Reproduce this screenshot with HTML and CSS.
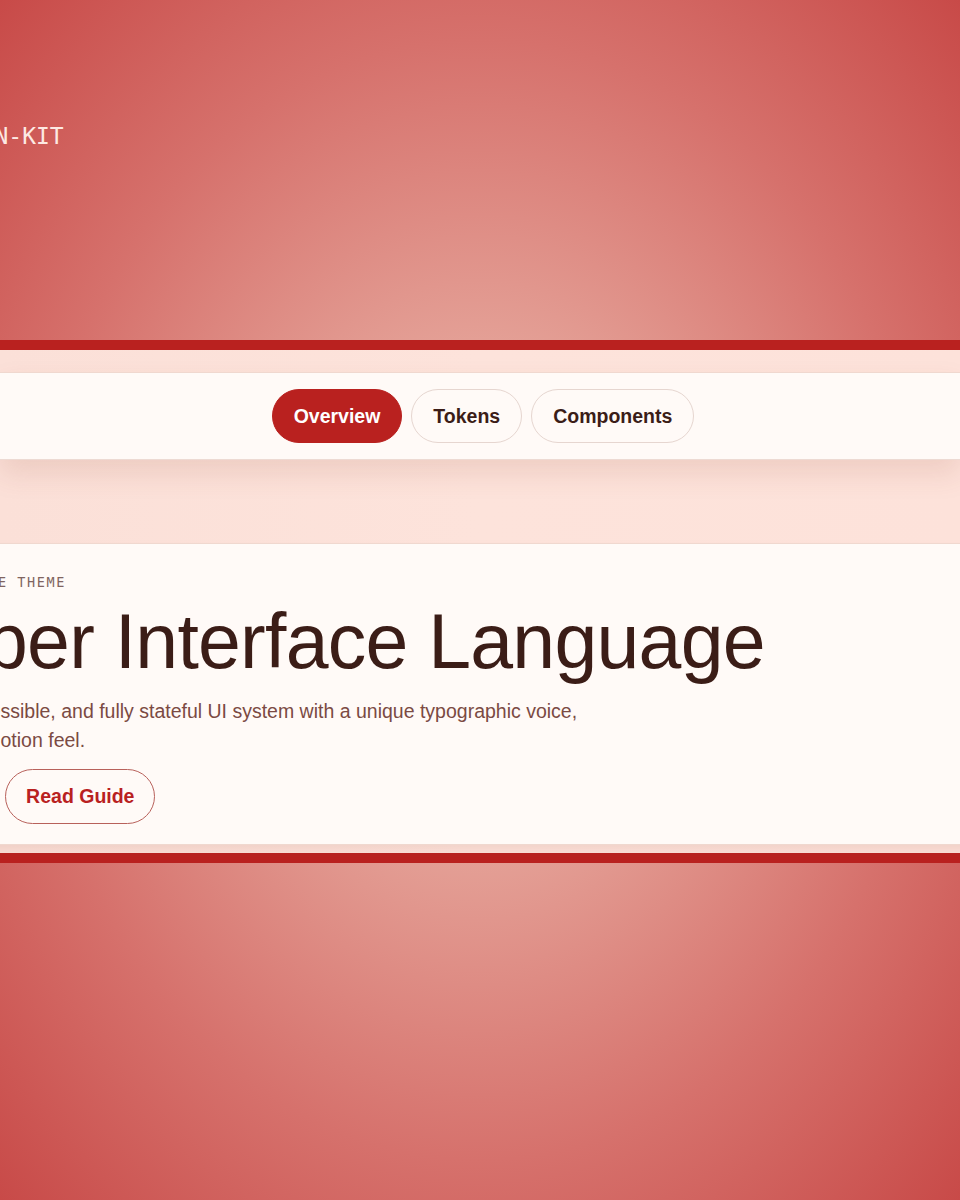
FILE: index.html
```html
<!DOCTYPE html>
<html lang="en">
  <head>
    <meta charset="UTF-8" />
    <meta name="viewport" content="width=device-width, initial-scale=1.0" />
    <title>Open Design-Kit - Copper Theme</title>
    <link rel="stylesheet" href="styles.css">
  </head>

  <body>
    <header class="topbar">
      <div class="frame">
        <span class="kit-label">OPEN DESIGN-KIT</span>
      </div>
    </header>

    <section class="showcase">
      <nav class="tabs">
        <div class="frame tabs-row">
          <a href="#" class="pill active">Overview</a>
          <a href="#" class="pill">Tokens</a>
          <a href="#" class="pill">Components</a>
        </div>
      </nav>

      <div class="hero">
        <p class="eyebrow">COPPER SIGNATURE THEME</p>
        <h1>Copper Interface Language</h1>
        <p class="lead">
          A rich, bold, accessible, and fully stateful UI system with a unique
          typographic voice, and a polished motion feel.
        </p>
        <div class="actions">
          <a href="#" class="btn btn-primary">Get Started</a>
          <a href="#" class="btn btn-outline">Read Guide</a>
        </div>
      </div>
    </section>
  </body>
</html>
```

FILE: styles.css
```css
:root {
  --red: #b9211f;
  --red-dark: #a51b1a;
  --blush: #fde3db;
  --paper: #fffaf7;
  --line: #f0d8cf;
  --ink: #3b1d17;
  --ink-soft: #7b4a43;
  --muted: #80645f;
  --frame-width: 1264px;
  --frame-offset: -149px;
}

* {
  box-sizing: border-box;
}

body {
  margin: 0;
  min-height: 1200px;
  overflow-x: hidden;
  font-family: "Liberation Sans", Arial, sans-serif;
  color: var(--ink);
  background: radial-gradient(
    ellipse farthest-corner at 50% 50%,
    #ebb0a6 0%,
    #e4a096 30%,
    #d6716c 66%,
    #c84a48 100%
  );
}

a {
  text-decoration: none;
}

/* shared content column, wider than the window and shifted left */
.frame {
  width: var(--frame-width);
  margin-left: var(--frame-offset);
}

.topbar {
  height: 340px;
  padding-top: 122px;
}

.kit-label {
  display: inline-block;
  margin-left: 5px;
  font-family: "DejaVu Sans Mono", monospace;
  font-size: 23px;
  line-height: 28px;
  color: #fde9e3;
}

.showcase {
  background: linear-gradient(90deg, #fbe0d8, var(--blush) 50%, #fde2da);
  border-top: 10px solid var(--red);
  border-bottom: 10px solid var(--red);
  padding: 22px 0 8px;
}

.tabs {
  background-color: var(--paper);
  border-top: 1px solid var(--line);
  border-bottom: 1px solid #eddad3;
  padding: 16px 0;
  box-shadow: 0 14px 26px rgba(150, 70, 50, 0.13);
}

.tabs-row {
  display: flex;
  justify-content: center;
  gap: 9px;
}

.pill {
  display: inline-block;
  padding: 15px 21px;
  border: 1px solid #e6d6d0;
  border-radius: 999px;
  background-color: var(--paper);
  color: var(--ink);
  font-size: 19.5px;
  line-height: 22px;
  font-weight: 700;
}

.pill.active {
  background-color: var(--red);
  border-color: var(--red);
  color: #fff;
}

.hero {
  width: calc(var(--frame-width) + 80px);
  margin: 83px 0 0 calc(var(--frame-offset) - 40px);
  padding: 30px 40px 20px;
  background-color: var(--paper);
  border: 1px solid var(--line);
  box-shadow: 0 6px 10px rgba(150, 70, 50, 0.1);
}

.eyebrow {
  margin: 0;
  font-family: "DejaVu Sans Mono", monospace;
  font-size: 13.5px;
  line-height: 16px;
  letter-spacing: 1.6px;
  color: var(--muted);
}

h1 {
  margin: 11px 0 0;
  text-indent: -6px;
  font-size: 77px;
  line-height: 81px;
  font-weight: 400;
  letter-spacing: -0.75px;
  color: var(--ink);
}

.lead {
  margin: 15px 0 0;
  max-width: 740px;
  font-size: 19.5px;
  line-height: 29px;
  color: var(--ink-soft);
}

.actions {
  display: flex;
  gap: 6px;
  margin-top: 14px;
}

.btn {
  display: inline-block;
  padding: 16px 20px;
  border-radius: 999px;
  font-size: 19.5px;
  line-height: 21px;
  font-weight: 700;
}

.btn-primary {
  background-color: var(--red);
  border: 1px solid var(--red);
  color: #fff;
}

.btn-outline {
  border: 1px solid #b8615b;
  color: var(--red);
}
```
